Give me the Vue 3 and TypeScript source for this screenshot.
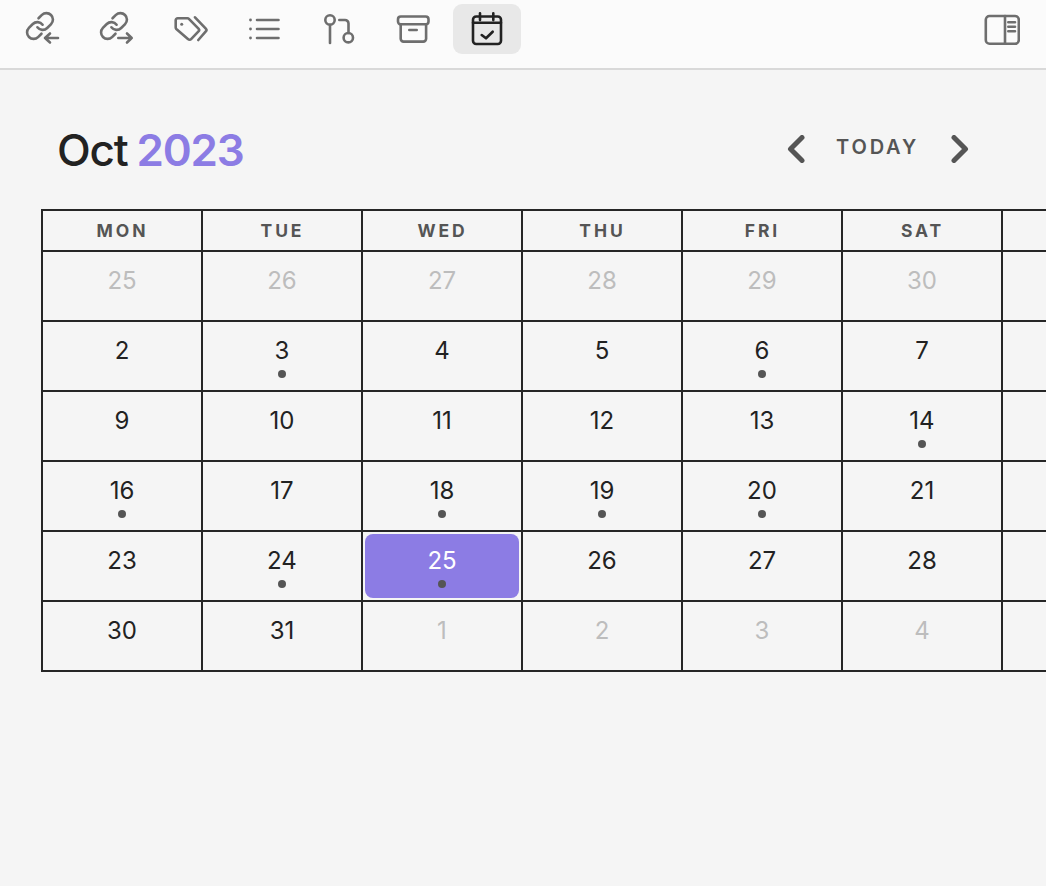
<script setup lang="ts">
interface Day { n?: number; muted?: boolean; dot?: boolean; selected?: boolean }
const weekdays = ['MON', 'TUE', 'WED', 'THU', 'FRI', 'SAT', '']
const d = (n?: number, o: Partial<Day> = {}): Day => ({ n, ...o })
const m = { muted: true }
const p = { dot: true }
const days: Day[] = [
  d(25, m), d(26, m), d(27, m), d(28, m), d(29, m), d(30, m), d(),
  d(2), d(3, p), d(4), d(5), d(6, p), d(7), d(),
  d(9), d(10), d(11), d(12), d(13), d(14, p), d(),
  d(16, p), d(17), d(18, p), d(19, p), d(20, p), d(21), d(),
  d(23), d(24, p), d(25, { dot: true, selected: true }), d(26), d(27), d(28), d(),
  d(30), d(31), d(1, m), d(2, m), d(3, m), d(4, m), d(),
]
</script>

<template>
  <div class="app">
    <div class="toolbar">
      <div class="tools">
        <button class="tool">
          <svg viewBox="0 0 36 36" width="36" height="36">
            <g transform="translate(0.4 -0.6) scale(1.3)" stroke-width="2">
              <path d="M10 13a5 5 0 0 0 7.54.54l3-3a5 5 0 0 0-7.07-7.07l-2.6 2.6" />
              <path d="M14 11a5 5 0 0 0-7.54-.54l-3 3a5 5 0 0 0 7.07 7.07l2.6-2.6" />
            </g>
            <path d="M21 27h13M26 22.500 21 27l5 4.500" />
          </svg>
        </button>
        <button class="tool">
          <svg viewBox="0 0 36 36" width="36" height="36">
            <g transform="translate(0.4 -0.6) scale(1.3)" stroke-width="2">
              <path d="M10 13a5 5 0 0 0 7.54.54l3-3a5 5 0 0 0-7.07-7.07l-2.6 2.6" />
              <path d="M14 11a5 5 0 0 0-7.54-.54l-3 3a5 5 0 0 0 7.07 7.07l2.6-2.6" />
            </g>
            <path d="M20.300 27h13.400M29 22.500l4.700 4.500-4.700 4.500" />
          </svg>
        </button>
        <button class="tool">
          <svg viewBox="0 0 36 36" width="36" height="36">
            <path d="M5.700 7.300h9.800a2 2 0 0 1 1.400.6l9.600 9.700a2 2 0 0 1 0 2.800l-7.400 7.800a2 2 0 0 1-2.900 0L4.300 18a2 2 0 0 1-.6-1.400V9.300a2 2 0 0 1 2-2Z" />
            <path d="M23 6.300 33.800 17.600a2 2 0 0 1 0 2.800L26.300 29" />
            <circle class="fill" cx="9.700" cy="13.300" r="1.500" />
          </svg>
        </button>
        <button class="tool">
          <svg viewBox="0 0 36 36" width="36" height="36">
            <path d="M11 9h21.500M11 18h21.500M11 27h21.500" />
            <circle class="fill" cx="4.500" cy="9" r="1.400" />
            <circle class="fill" cx="4.500" cy="18" r="1.400" />
            <circle class="fill" cx="4.500" cy="27" r="1.400" />
          </svg>
        </button>
        <button class="tool">
          <svg viewBox="0 0 36 36" width="36" height="36">
            <circle cx="9" cy="9" r="4.700" />
            <path d="M9 13.700V32" />
            <circle cx="27.300" cy="26.700" r="4.700" />
            <path d="M18.300 9h5.700a3.500 3.500 0 0 1 3.500 3.500V22" />
          </svg>
        </button>
        <button class="tool">
          <svg viewBox="0 0 36 36" width="36" height="36">
            <rect x="3" y="5.500" width="30.500" height="7.800" rx="2.800" />
            <path d="M5.700 13.300v14.500a2.800 2.800 0 0 0 2.800 2.800h19.800a2.800 2.800 0 0 0 2.800-2.800V13.300" />
            <path d="M14.300 19h7.400" />
          </svg>
        </button>
        <button class="tool active">
          <svg viewBox="0 0 36 36" width="36" height="36">
            <rect x="4" y="5.500" width="28" height="27.500" rx="3.200" />
            <path d="M4 11.700h28M11 2.300V9M24.300 2.300V9" />
            <path d="M12.700 24l4.300 3.300 6.700-6.600" />
          </svg>
        </button>
      </div>
      <button class="tool">
        <svg viewBox="0 0 36 36" width="36" height="36">
          <rect x="1.800" y="5" width="33" height="27.800" rx="3.800" />
          <path d="M21 5v27.800" />
          <path d="M24.300 11.300H31M24.300 15.700H31M24.300 20.300H31" />
        </svg>
      </button>
    </div>

    <main class="main">
      <header class="head">
        <h1 class="title">Oct <span class="year">2023</span></h1>
        <div class="controls">
          <svg class="chev" viewBox="0 0 28 28" width="28" height="28"><path d="M20 2.500 8.500 14 20 25.500" /></svg>
          <span class="today">TODAY</span>
          <svg class="chev" viewBox="0 0 28 28" width="28" height="28"><path d="M9 2.500 20.500 14 9 25.500" /></svg>
        </div>
      </header>

      <div class="grid">
        <div v-for="(w, i) in weekdays" :key="i" class="wd">{{ w }}</div>
        <div v-for="(day, i) in days" :key="i" class="cell">
          <div class="day" :class="{ muted: day.muted, selected: day.selected }">
            <span class="num">{{ day.n }}</span>
            <span v-if="day.dot" class="dot"></span>
          </div>
        </div>
      </div>
    </main>
  </div>
</template>

<style>
html, body { margin: 0; background: #f5f5f5; }
</style>

<style scoped>
.app {
  width: 1046px;
  height: 886px;
  overflow: hidden;
  background: #f5f5f5;
  font-family: Inter, "Liberation Sans", sans-serif;
  color: #222;
}
.toolbar {
  height: 68px;
  display: flex;
  justify-content: space-between;
  padding-right: 10px;
  background: #fbfbfb;
  border-bottom: 2px solid #d9d9d9;
}
.tools {
  display: flex;
  gap: 6.17px;
  padding-left: 8px;
}
.tool {
  width: 68px;
  height: 50px;
  margin-top: 4px;
  padding: 0;
  border: 0;
  border-radius: 9px;
  background: none;
  color: #6e6e6e;
  display: flex;
  align-items: center;
  justify-content: center;
}
.tool.active {
  background: #e8e8e8;
  color: #222;
}
.tool svg {
  fill: none;
  stroke: currentColor;
  stroke-width: 2.6;
  stroke-linecap: round;
  stroke-linejoin: round;
}
.tool svg .fill {
  fill: currentColor;
  stroke: none;
}
.main {
  padding-left: 41px;
}
.head {
  display: flex;
  justify-content: space-between;
  align-items: center;
  height: 40px;
  padding: 60px 73px 0 16px;
  margin-bottom: 39px;
}
.title {
  margin: 0;
  font-size: 44px;
  line-height: 40px;
  font-weight: 500;
  letter-spacing: -1.2px;
  word-spacing: -1.5px;
  color: #222;
}
.year {
  color: #8c7ce4;
  font-weight: 600;
}
.controls {
  display: flex;
  align-items: center;
  gap: 26px;
  margin-top: -2px;
  color: #555;
}
.today {
  font-size: 20px;
  font-weight: 600;
  letter-spacing: 2.8px;
  line-height: 24px;
  margin-bottom: 4px;
}
.chev {
  fill: none;
  stroke: currentColor;
  stroke-width: 5;
  stroke-linecap: round;
  stroke-linejoin: round;
}
.grid {
  display: grid;
  grid-template-columns: repeat(7, 160px);
  grid-template-rows: 41px repeat(6, 70px);
  width: 1120px;
  border-left: 2px solid #262626;
  border-top: 2px solid #262626;
}
.wd, .cell {
  box-sizing: border-box;
  border-right: 2px solid #262626;
  border-bottom: 2px solid #262626;
}
.wd {
  display: flex;
  align-items: center;
  justify-content: center;
  padding-left: 1px;
  font-size: 17.5px;
  font-weight: 700;
  letter-spacing: 2.9px;
  color: #555;
}
.cell {
  padding: 2px;
}
.day {
  height: 100%;
  box-sizing: border-box;
  padding-top: 12px;
  border-radius: 8px;
  display: flex;
  flex-direction: column;
  align-items: center;
  color: #222;
}
.num {
  font-size: 24px;
  line-height: 30px;
}
.dot {
  width: 8px;
  height: 8px;
  margin-top: 4px;
  border-radius: 50%;
  background: #555;
}
.muted {
  color: #bdbdbd;
}
.selected {
  background: #8c7ce4;
  color: #fff;
}
</style>
